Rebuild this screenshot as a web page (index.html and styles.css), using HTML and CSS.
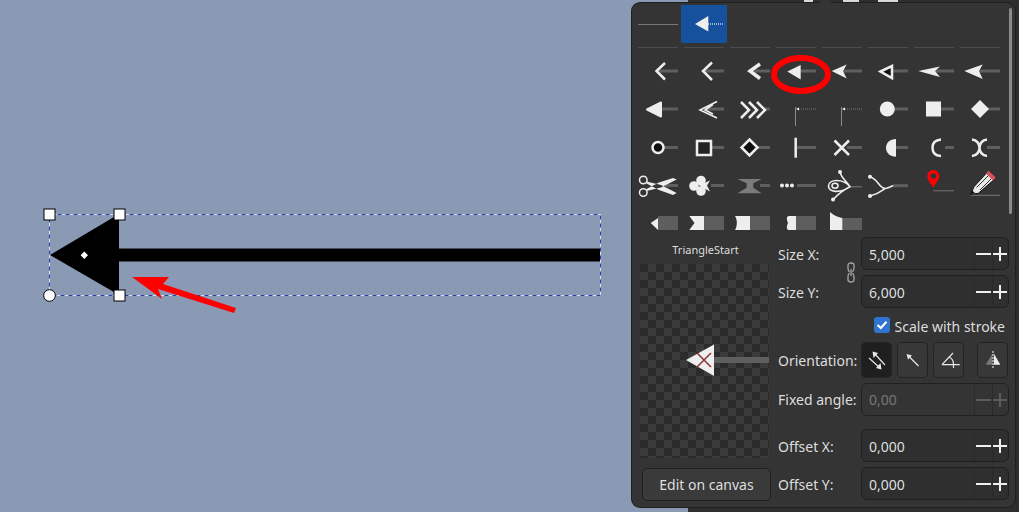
FILE: index.html
```html
<!DOCTYPE html>
<html lang="en">
<head>
  <meta charset="UTF-8" />
  <title>Markers</title>
  <link rel="stylesheet" href="styles.css">
</head>
<body>
  <svg class="canvas" viewBox="0 0 688 512" width="688" height="512">
    <path class="shape" d="M50 255 L119 214 V248.5 H600 V261.5 H119 V295 Z"/>
    <rect class="sel-white" x="49.5" y="214.5" width="551" height="81"/>
    <rect class="sel-blue" x="49.5" y="214.5" width="551" height="81"/>
    <rect class="handle" x="44" y="209" width="11" height="11"/>
    <rect class="handle" x="114" y="209" width="11" height="11"/>
    <rect class="handle" x="114" y="290" width="11" height="11"/>
    <circle class="handle" cx="49.5" cy="295.5" r="5.8"/>
    <path class="center" d="M84.3 251.5 L88 255.3 L84.3 259 L80.6 255.3 Z"/>
    <path class="red" d="M132 277 H169 L163 284 L236 308 L234 313 L158 289 L162 299 Z"/>
  </svg>

  <div class="sidebar">
    <div class="toolbar">
      <span class="tool tool-a"></span>
      <span class="tool tool-b"></span>
      <span class="tool tool-c"></span>
    </div>
  </div>

  <div class="panel">
    <div class="markers">
      <div class="mk"><svg viewBox="0 0 46 38"><path class="thin" d="M3 19.5 H43"/></svg></div>
      <div class="mk selected"><svg viewBox="0 0 46 38"><path class="dots-blue" d="M27 19 H43"/><path class="fill" d="M14 19 L27.3 11 V26.5 Z"/></svg></div>
      <div class="mk"></div><div class="mk"></div><div class="mk"></div><div class="mk"></div><div class="mk"></div><div class="mk"></div>

      <div class="sep"></div><div class="sep"></div><div class="sep"></div><div class="sep"></div>
      <div class="sep"></div><div class="sep"></div><div class="sep"></div><div class="sep"></div>

      <!-- arrows -->
      <div class="mk"><svg viewBox="0 0 46 38"><path class="ln" d="M24 19 H43"/><path class="st" d="M30 11 L21.5 19 L30 27.5"/></svg></div>
      <div class="mk"><svg viewBox="0 0 46 38"><path class="ln" d="M24 19 H43"/><path class="st" d="M31 10.5 L22 19 L31 28"/></svg></div>
      <div class="mk"><svg viewBox="0 0 46 38"><path class="ln" d="M27 19 H43"/><path class="st thick" d="M33 12 L23 19 L33 26.5"/></svg></div>
      <div class="mk"><svg viewBox="0 0 46 38"><path class="ln" d="M27 19 H43"/><path class="fill" d="M14.3 19.5 L27.7 13 V27.5 Z"/></svg></div>
      <div class="mk"><svg viewBox="0 0 46 38"><path class="ln" d="M24 19 H43"/><path class="fill" d="M12.7 19 L27.7 12.5 L24 19 L27.7 26.5 Z"/></svg></div>
      <div class="mk"><svg viewBox="0 0 46 38"><path class="ln" d="M28 19 H43"/><path class="hollow" d="M15.5 19.5 L27 14 V26 Z"/></svg></div>
      <div class="mk"><svg viewBox="0 0 46 38"><path class="ln" d="M24 19 H43"/><path class="fill" d="M7.3 19 L29 14.5 L24 19 L29 25 Z"/></svg></div>
      <div class="mk"><svg viewBox="0 0 46 38"><path class="ln" d="M22 19 H43"/><path class="fill" d="M7.3 19 L25.7 12.5 L22 19 L25.7 27 Z"/></svg></div>

      <div class="mk"><svg viewBox="0 0 46 38"><path class="ln" d="M27 19 H43"/><path class="fill round" d="M12 19.5 L26 12.5 V26.5 Z"/></svg></div>
      <div class="mk"><svg viewBox="0 0 46 38"><path class="ln" d="M24 19 H43"/><path class="st slim" d="M36 11.5 L19 20 L36 28 M32 14.5 L24 20 L32 24"/></svg></div>
      <div class="mk"><svg viewBox="0 0 46 38"><path class="ln" d="M36 19 H43"/><path class="st" d="M14 12 L22 20 L14 28 M22 12 L30 20 L22 28 M30 12 L38 20 L30 28"/></svg></div>
      <div class="mk"><svg viewBox="0 0 46 38"><path class="bar" d="M22.500 17 V36"/><path class="fill" d="M23 19 L26 17.5 V20.5 Z"/><path class="dots" d="M26 19 H43"/></svg></div>
      <div class="mk"><svg viewBox="0 0 46 38"><path class="bar" d="M22.500 17 V36"/><path class="fill" d="M23 19 L26 17.5 V20.5 Z"/><path class="dots" d="M26 19 H43"/></svg></div>
      <div class="mk"><svg viewBox="0 0 46 38"><path class="ln" d="M28 19 H43"/><circle class="fill" cx="22.3" cy="19" r="7.5"/></svg></div>
      <div class="mk"><svg viewBox="0 0 46 38"><path class="ln" d="M29 19 H43"/><rect class="fill" x="15" y="11.5" width="15" height="15"/></svg></div>
      <div class="mk"><svg viewBox="0 0 46 38"><path class="ln" d="M30 19 H43"/><path class="fill" d="M23 10 L32 19 L23 28 L14 19 Z"/></svg></div>

      <!-- shapes -->
      <div class="mk"><svg viewBox="0 0 46 38"><path class="ln" d="M29 19.5 H43"/><circle class="outlined" cx="23" cy="19.5" r="5.5"/></svg></div>
      <div class="mk"><svg viewBox="0 0 46 38"><path class="ln" d="M30 19.5 H43"/><rect class="outlined soft" x="16" y="13" width="14" height="14"/></svg></div>
      <div class="mk"><svg viewBox="0 0 46 38"><path class="ln" d="M30 19.5 H43"/><path class="outlined" d="M22.5 11.5 L30.5 19.5 L22.5 27.5 L14.5 19.5 Z"/></svg></div>
      <div class="mk"><svg viewBox="0 0 46 38"><path class="ln" d="M24 19.5 H43"/><path class="st" d="M22.7 9.7 V29.7"/></svg></div>
      <div class="mk"><svg viewBox="0 0 46 38"><path class="ln" d="M28 19.5 H43"/><path class="st" d="M15.5 12.5 L30 27 M30 12.5 L15.5 27"/></svg></div>
      <div class="mk"><svg viewBox="0 0 46 38"><path class="ln" d="M31 19.5 H43"/><path class="half" d="M31 11 V28.7 C25 28.7 21 25 21 19.8 C21 14.6 25 11 31 11 Z"/></svg></div>
      <div class="mk"><svg viewBox="0 0 46 38"><path class="ln" d="M34 19.5 H43"/><path class="st" d="M30 11.5 C24 12 21.5 15.5 21.5 19.7 C21.5 24 24 27.5 30 28"/></svg></div>
      <div class="mk"><svg viewBox="0 0 46 38"><path class="ln" d="M30 19.5 H43"/><path class="st" d="M15 11.5 C20 12 22.500 16 22.500 19.7 C22.500 23.500 20 27.5 15 28 M30 11.5 C25 12 22.500 16 22.500 19.7 C22.500 23.500 25 27.5 30 28"/></svg></div>

      <div class="mk"><svg viewBox="0 0 46 38"><path class="ln" d="M30 19.5 H43"/><circle class="ring" cx="8.3" cy="14" r="3.8"/><circle class="ring" cx="8.3" cy="26.5" r="3.8"/><path class="fill" d="M11.5 15.5 L26 19 L41.7 27 L38 29 L24 24 L11.500 17.500 Z M11.5 25 L26 21.500 L41.7 13.500 L38 12 L24 16.500 L11.500 23 Z"/></svg></div>
      <div class="mk"><svg viewBox="0 0 46 38"><path class="ln" d="M30 19.5 H43"/><circle class="fill" cx="20" cy="14.5" r="4.8"/><circle class="fill" cx="13" cy="20" r="4.8"/><circle class="fill" cx="20" cy="25" r="4.8"/><path class="fill" d="M18 19.5 L29 14.5 L26 19.5 L29 25.5 Z"/></svg></div>
      <div class="mk"><svg viewBox="0 0 46 38"><path class="ln" d="M33 19.5 H43"/><path class="grey" d="M10.300 13 H34.700 L26.300 17.300 V21.700 L34.700 27.300 H10.300 L19.700 21.700 V17.300 Z"/></svg></div>
      <div class="mk"><svg viewBox="0 0 46 38"><path class="ln" d="M24 19.5 H43"/><circle class="fill" cx="9" cy="19.5" r="2"/><circle class="fill" cx="14" cy="19.5" r="2"/><circle class="fill" cx="19" cy="19.5" r="2"/></svg></div>
      <div class="mk"><svg viewBox="0 0 46 38"><path class="thin dim" d="M31 20.700 H43"/><path class="st slim" d="M21 5 C21 11 26 13 31 20.700 C26 23 20 27 13.700 34 M31 20.700 C24 12 9.500 13 9.500 20 C9.500 26 21 28 31 20.700"/><circle class="fill" cx="21" cy="6" r="2"/><circle class="fill" cx="14" cy="33.500" r="2"/><ellipse class="ring" cx="16" cy="19.700" rx="3" ry="2.500"/></svg></div>
      <div class="mk"><svg viewBox="0 0 46 38"><path class="ln" d="M28 19.7 H43"/><path class="st slim" d="M5 10.700 C13 13 14 22 20 22.500 C24 22.500 26 20 28.300 19.700 M5 30 C13 28 15 26 20 22.500"/><circle class="fill" cx="5" cy="10.700" r="2"/><circle class="fill" cx="5" cy="30" r="2"/></svg></div>
      <div class="mk"><svg viewBox="0 0 46 38"><path class="ln thin-ln" d="M22.300 24.700 H43"/><path class="pin" fill-rule="evenodd" d="M22.300 21.700 C18.500 15.500 16.300 13.500 16.300 10 A6 6 0 0 1 28.300 10 C28.300 13.500 26 15.500 22.300 21.700 Z M22.300 7.200 A2.800 2.800 0 1 0 22.300 12.800 A2.800 2.800 0 1 0 22.300 7.200 Z"/></svg></div>
      <div class="mk"><svg viewBox="0 0 46 38"><path class="thin" d="M14 29.300 H43"/><path class="pencil-body" d="M13.700 28.300 L17 20.700 L31.300 5 L38.700 12.300 L21.300 27.300 Z"/><path class="pencil-lines" d="M19.500 21.500 L32 9 M23 24 L35 12"/><path class="pencil-end" d="M29 7.500 L31.300 4.500 L38.700 11.500 L36 14.500 Z"/><path class="pencil-tip" d="M13.700 28.300 L15 24.500 L18 27 Z"/></svg></div>

      <!-- end caps -->
      <div class="mk short"><svg viewBox="0 0 46 33"><rect class="cap" x="23" y="12" width="20" height="14"/><path class="fill" d="M15.700 19 L23 14 V26 Z"/></svg></div>
      <div class="mk short"><svg viewBox="0 0 46 33"><rect class="cap" x="23" y="12" width="20" height="14"/><path class="fill" d="M8.300 12 H23 V26 H8.300 L13.500 19 Z"/></svg></div>
      <div class="mk short"><svg viewBox="0 0 46 33"><rect class="cap" x="23" y="12" width="20" height="14"/><path class="fill" d="M8 12 H23 V26 H8 C10.500 22 10.500 16 8 12 Z"/></svg></div>
      <div class="mk short"><svg viewBox="0 0 46 33"><rect class="cap" x="23" y="12" width="20" height="14"/><path class="fill" d="M16 12 H23 V26 H16 C13 26 13.700 22 15 19 C13.700 16 13 12 16 12 Z"/></svg></div>
      <div class="mk short"><svg viewBox="0 0 46 33"><rect class="cap" x="23" y="14" width="20" height="12"/><path class="fill" d="M11 8 C14 11 18 13 23.300 14 V26 H11 Z"/></svg></div>
    </div>

    <div class="bottom">
      <div class="preview-col">
        <div class="marker-name">TriangleStart</div>
        <div class="preview">
          <svg viewBox="0 0 129 194" width="129" height="194">
            <rect class="preview-line" x="74" y="93" width="55" height="6"/>
            <path class="fill" d="M46 96 L74 80.500 V112 Z"/>
            <path class="preview-x" d="M57 89 L71 103 M71 89 L57 103"/>
          </svg>
        </div>
        <button class="edit-btn">Edit on canvas</button>
      </div>

      <div class="form">
        <div class="size-group">
          <div class="size-rows">
            <div class="row">
              <label>Size X:</label>
              <div class="spin"><span class="value">5,000</span><span class="step minus"></span><span class="step plus"></span></div>
            </div>
            <div class="row">
              <label>Size Y:</label>
              <div class="spin"><span class="value">6,000</span><span class="step minus"></span><span class="step plus"></span></div>
            </div>
          </div>
          <svg class="link" viewBox="0 0 8 21" width="8" height="21">
            <path d="M2.500 10 C1 9 1 8 1 6 V3.500 C1 1.500 2.500 1 4 1 C5.500 1 7 1.500 7 3.500 V6 C7 8 6 9 5.500 10"/>
            <path d="M2.500 11 C1 12 1 13 1 15 V17.500 C1 19.500 2.500 20 4 20 C5.500 20 7 19.500 7 17.500 V15 C7 13 6 12 5.500 11 M4 7 V14"/>
          </svg>
        </div>

        <div class="scale-row">
          <span class="checkbox"><svg viewBox="0 0 16 16" width="16" height="16"><path d="M3.500 8 L6.800 11 L12.500 4.800"/></svg></span>
          <span class="scale-text">Scale with stroke</span>
        </div>

        <div class="row orientation">
          <label>Orientation:</label>
          <div class="orient-btns">
            <button class="icon-btn active"><svg viewBox="1 1 29 34"><path class="o-line" d="M8 16 L19 26 M24 23 L13 11"/><path class="o-head" d="M20.500 27.500 L15 26 L19.500 21 Z M11.500 9.500 L17 11 L12.500 16 Z"/></svg></button>
            <button class="icon-btn"><svg viewBox="1 1 29 34"><path class="o-line" d="M21.500 24 L11 13.500"/><path class="o-head" d="M9.500 12 L15 13.500 L11 17.500 Z"/></svg></button>
            <button class="icon-btn"><svg viewBox="1 1 29 34"><path class="o-line" d="M9 22.700 H26.700 M9 22.700 L20 11 M16 15 C19 16 20.500 19 20.500 22.700 M20.500 22.700 V26"/></svg></button>
            <button class="icon-btn flip"><svg viewBox="1 1 29 34"><path class="flip-l" d="M8.700 22.700 L15.300 11.700 V22.700 Z"/><path class="fill" d="M17 11.700 L23.300 22.700 H17 Z"/><path class="flip-axis" d="M16 9 V26"/></svg></button>
          </div>
        </div>

        <div class="row fixed">
          <label>Fixed angle:</label>
          <div class="spin disabled"><span class="value">0,00</span><span class="step minus"></span><span class="step plus"></span></div>
        </div>

        <div class="row offset">
          <label>Offset X:</label>
          <div class="spin"><span class="value">0,000</span><span class="step minus"></span><span class="step plus"></span></div>
        </div>
        <div class="row">
          <label>Offset Y:</label>
          <div class="spin"><span class="value">0,000</span><span class="step minus"></span><span class="step plus"></span></div>
        </div>
      </div>
    </div>

    <div class="scrollbar"></div>
    <svg class="highlight" viewBox="0 0 60 39" width="60" height="39"><ellipse cx="30" cy="19.500" rx="27" ry="16.500"/></svg>
  </div>
</body>
</html>
```

FILE: styles.css
```css
:root {
  --panel: #343434;
  --edge: #1f1f1f;
  --text: #dedede;
  --white: #eeeeee;
  --line: #5f5f5f;
}
* {
  margin: 0;
  padding: 0;
  box-sizing: border-box;
  font-family: 'Noto Sans', sans-serif;
}
body {
  width: 1019px;
  height: 512px;
  overflow: hidden;
  position: relative;
  background: #8a9ab5;
  display: flex;
}

/* canvas */
.canvas {
  flex: none;
  display: block;
}
.shape { fill: #000; }
.sel-white { fill: none; stroke: #d8dde6; stroke-width: 1; }
.sel-blue { fill: none; stroke: #2a3db0; stroke-width: 1; stroke-dasharray: 4 4; }
.handle { fill: #fff; stroke: #000; stroke-width: 1; }
.center { fill: #fff; }
.red { fill: #ff0000; }

/* window behind the popover */
.sidebar {
  flex: 1;
  background: #2e2e2e;
}
.toolbar {
  display: flex;
  height: 2px;
}
.tool {
  background: #d8d8d8;
  height: 2px;
}
.tool-a { width: 9px; margin-left: 116px; }
.tool-b { width: 16px; margin-left: 30px; }
.tool-c { width: 20px; margin-left: 19px; }

/* popover */
.panel {
  position: absolute;
  left: 632px;
  top: 3px;
  width: 383px;
  height: 504px;
  background: var(--panel);
  border-radius: 8px;
  box-shadow: 0 0 0 1px var(--edge);
  padding: 2px 3px 0;
}
.panel::before {
  content: "";
  position: absolute;
  left: 187px;
  top: -4px;
  width: 12px;
  height: 12px;
  background: var(--panel);
  transform: rotate(45deg);
}
.markers {
  display: grid;
  grid-template-columns: repeat(8, 46px);
  grid-template-rows: 38px 9px 38px 38px 38px 38px 33px;
  position: relative;
}
.mk svg {
  display: block;
  width: 46px;
  height: 38px;
  overflow: visible;
}
.mk.short svg { height: 33px; }
.mk.selected { background: #15519c; }
.sep {
  margin: 4px 3px 0;
  height: 1px;
  background: #4d4d4d;
}

.ln { stroke: var(--line); stroke-width: 3; fill: none; }
.thin-ln { stroke-width: 1.5; }
.thin { stroke: #777; stroke-width: 1; fill: none; }
.dim { stroke: #666; stroke-width: 1.5; }
.dots { stroke: #7a7a7a; stroke-width: 1; stroke-dasharray: 1 1; fill: none; }
.dots-blue { stroke: #9fb4d2; stroke-width: 2; stroke-dasharray: 1 1; fill: none; }
.fill { fill: var(--white); }
.round { stroke: var(--white); stroke-width: 2; stroke-linejoin: round; }
.st { stroke: var(--white); stroke-width: 2.5; fill: none; }
.thick { stroke-width: 3.5; }
.slim { stroke-width: 1.6; }
.bar { stroke: #8a8a8a; stroke-width: 1; fill: none; }
.hollow { fill: #111; stroke: var(--white); stroke-width: 2.5; }
.outlined { fill: #0f0f0f; stroke: var(--white); stroke-width: 2.5; }
.soft { fill: #222; }
.half { fill: var(--white); }
.ring { fill: none; stroke: var(--white); stroke-width: 1.5; }
.grey { fill: #7b7b7b; }
.pin { fill: #ff0000; }
.pencil-body { fill: #e8e8e8; stroke: #111; stroke-width: 1; }
.pencil-lines { stroke: #333; stroke-width: 1; fill: none; }
.pencil-end { fill: #d8505c; }
.pencil-tip { fill: #111; }
.cap { fill: #5e5e5e; }

.highlight {
  position: absolute;
  left: 139px;
  top: 52px;
}
.highlight ellipse {
  fill: none;
  stroke: #ff0000;
  stroke-width: 6;
}
.scrollbar {
  position: absolute;
  left: 377px;
  top: 5px;
  width: 3px;
  height: 206px;
  border-radius: 2px;
  background: #8a8a8a;
}

/* lower half */
.bottom {
  display: flex;
  padding-left: 5px;
}
.preview-col {
  width: 131px;
  flex: none;
}
.marker-name {
  height: 26px;
  margin-bottom: 1px;
  line-height: 26px;
  font-size: 11px;
  text-align: center;
  color: var(--text);
}
.preview {
  width: 129px;
  height: 194px;
  background-color: #2b2b2b;
  background-image: conic-gradient(#3b3b3b 25%, transparent 0 50%, #3b3b3b 0 75%, transparent 0);
  background-size: 16px 16px;
}
.preview svg { display: block; }
.preview-line { fill: #5f5f5f; }
.preview-x { stroke: #8a3535; stroke-width: 1.5; fill: none; }
.edit-btn {
  display: block;
  width: 129px;
  height: 33px;
  margin: 10px 0 0 2px;
  background: #3a3a3a;
  border: 1px solid #202020;
  border-radius: 5px;
  color: var(--text);
  font-size: 14px;
}

.form {
  width: 231px;
  margin-left: 7px;
  display: flex;
  flex-direction: column;
  gap: 5px;
  font-size: 14px;
  color: var(--text);
}
.row {
  display: flex;
  align-items: center;
  justify-content: space-between;
}
.row label, .value, .scale-text {
  padding-top: 2px;
}
.orientation label, .fixed label, .fixed .value {
  padding-top: 0;
}
.size-group {
  position: relative;
}
.size-rows {
  display: flex;
  flex-direction: column;
  gap: 5px;
}
.link {
  position: absolute;
  left: 69px;
  top: 25px;
  fill: none;
  stroke: #a8a8a8;
  stroke-width: 1.3;
}
.spin {
  width: 148px;
  height: 33px;
  display: flex;
  align-items: center;
  background: #2f2f2f;
  border: 1px solid #202020;
  border-radius: 6px;
}
.value {
  flex: 1;
  padding-left: 7px;
}
.step {
  height: 100%;
  position: relative;
  border-left: 1px solid #292929;
}
.minus { width: 18px; }
.plus { width: 16px; }
.step::before, .plus::after {
  content: "";
  position: absolute;
  background: #f0f0f0;
}
.minus::before { left: 1px; top: 15px; width: 15px; height: 2px; }
.plus::before { left: 0; top: 15px; width: 14px; height: 2px; }
.plus::after { left: 6px; top: 9px; width: 2px; height: 14px; }
.disabled { background: transparent; }
.disabled .value { color: #777; }
.disabled .step { border-left-color: #2a2a2a; }
.disabled .step::before, .disabled .plus::after { background: #5c5c5c; }

.scale-row {
  height: 24px;
  display: flex;
  align-items: center;
  justify-content: flex-end;
  gap: 5px;
  padding-right: 4px;
}
.checkbox {
  width: 16px;
  height: 16px;
  border-radius: 3px;
  background: #2f74d0;
}
.checkbox svg {
  display: block;
  fill: none;
  stroke: #fff;
  stroke-width: 2.2;
}

.orient-btns {
  width: 148px;
  display: flex;
}
.icon-btn {
  width: 31px;
  height: 36px;
  margin-right: 5px;
  background: #383838;
  border: 1px solid #232323;
  border-radius: 5px;
}
.icon-btn.active { background: #1f1f1f; }
.icon-btn.flip { margin: 0 0 0 8px; }
.icon-btn svg {
  display: block;
  width: 29px;
  height: 34px;
}
.o-line { stroke: #e8e8e8; stroke-width: 1.2; fill: none; }
.o-head { fill: #e8e8e8; }
.flip-l { fill: #777; }
.flip-axis { stroke: #fff; stroke-width: 1; stroke-dasharray: 2 1; }
.offset { margin-top: 8px; }
```
